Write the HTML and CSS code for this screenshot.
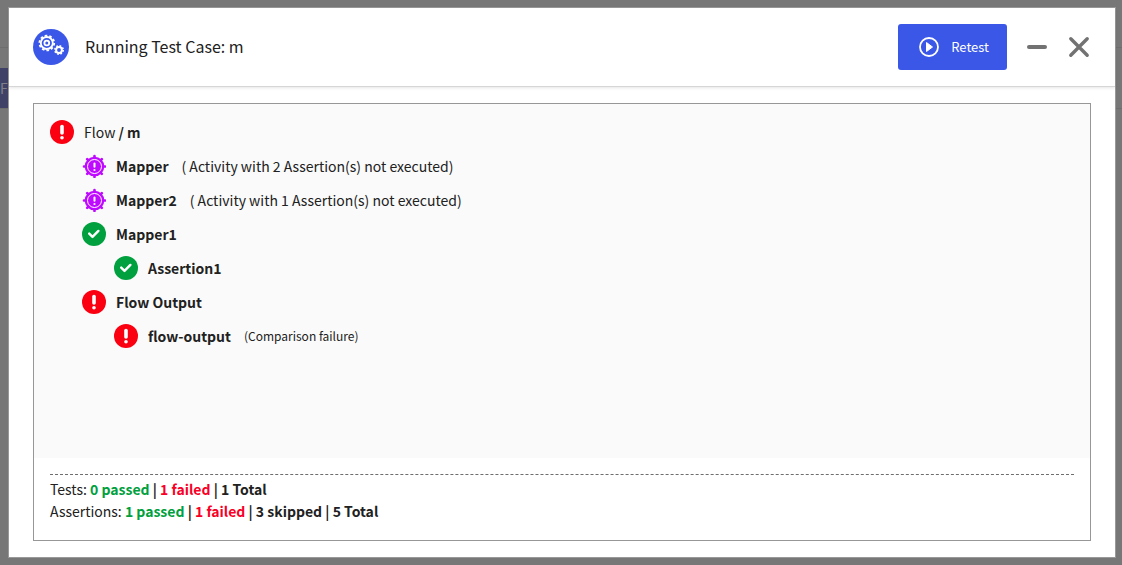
FILE: index.html
```html
<!DOCTYPE html>
<html lang="en">
<head>
    <meta charset="UTF-8">
    <meta name="viewport" content="width=device-width, initial-scale=1.0">
    <title>Running Test Case: m</title>
    <link rel="stylesheet" href="styles.css">
</head>
<body>
    <svg class="sprite" aria-hidden="true">
        <symbol id="icon-error" viewBox="0 0 24 24">
            <circle cx="12" cy="12" r="12" fill="#fa0011"/>
            <path d="M12 6.6v6.4" stroke="#fff" stroke-width="3.6" stroke-linecap="round"/>
            <circle cx="12" cy="17.8" r="1.8" fill="#fff"/>
        </symbol>
        <symbol id="icon-success" viewBox="0 0 24 24">
            <circle cx="12" cy="12" r="12" fill="#00a03e"/>
            <path d="M7.2 11.6l3.3 3.3 5.9-6" fill="none" stroke="#fff" stroke-width="2.4" stroke-linecap="round" stroke-linejoin="round"/>
        </symbol>
        <symbol id="icon-skipped" viewBox="0 0 24 24">
            <g stroke="#be0aff" stroke-width="2.6" stroke-linecap="round">
                <path d="M12.5 2v21M2 12.5h21M5.2 5.2l14.6 14.6M19.8 5.2L5.2 19.8"/>
            </g>
            <circle cx="12.5" cy="12.5" r="9.8" fill="#be0aff"/>
            <circle cx="12.5" cy="12.5" r="7" fill="none" stroke="#fff" stroke-width="1"/>
            <path d="M12.5 9.4v3.4" stroke="#fff" stroke-width="2" stroke-linecap="round"/>
            <circle cx="12.5" cy="16" r="1.1" fill="#fff"/>
        </symbol>
    </svg>

    <div class="page">
        <div class="page-header"></div>
        <div class="page-toolbar">
            <span class="page-tab">Fl</span>
        </div>
    </div>

    <div class="modal" role="dialog" aria-labelledby="modal-title">
        <header class="modal-header">
            <svg class="modal-logo" viewBox="0 0 36 36" aria-hidden="true">
                <circle cx="18" cy="18" r="18" fill="#3a57e8"/>
                <g fill="none" stroke="#fff">
                    <circle cx="13.8" cy="14" r="6" stroke-width="1.8"/>
                    <circle cx="13.8" cy="14" r="7.4" stroke-width="1.8" stroke-dasharray="2.6 2.05"/>
                    <circle cx="13.8" cy="14" r="2.4" stroke-width="1.8"/>
                    <circle cx="26" cy="21" r="2.9" stroke-width="2"/>
                    <circle cx="26" cy="21" r="4.2" stroke-width="1.6" stroke-dasharray="1.7 1.6"/>
                </g>
            </svg>
            <h1 class="modal-title" id="modal-title">Running Test Case: m</h1>
            <button class="btn-retest" type="button">
                <svg class="btn-icon" viewBox="0 0 20 20" aria-hidden="true">
                    <circle cx="10" cy="10" r="9" fill="none" stroke="#fff" stroke-width="1.8"/>
                    <path d="M7.5 5.5v9l6-4.5z" fill="#fff" stroke="#fff" stroke-linejoin="round"/>
                </svg>
                Retest
            </button>
            <button class="btn-window" type="button" aria-label="Minimize">
                <svg viewBox="0 0 24 24"><path d="M4 12h16" stroke-width="4"/></svg>
            </button>
            <button class="btn-window" type="button" aria-label="Close">
                <svg viewBox="0 0 24 24"><path d="M3.8 3.8l16.4 16.4M20.2 3.8L3.8 20.2" stroke-width="3.4"/></svg>
            </button>
        </header>

        <main class="modal-body">
            <section class="report">
                <ul class="results">
                    <li>
                        <div class="result">
                            <svg class="status"><use href="#icon-error"/></svg>
                            <span>Flow <b>/ m</b></span>
                        </div>
                        <ul>
                            <li>
                                <div class="result">
                                    <svg class="status"><use href="#icon-skipped"/></svg>
                                    <b>Mapper</b>
                                    <span class="note">( Activity with 2 Assertion(s) not executed)</span>
                                </div>
                            </li>
                            <li>
                                <div class="result">
                                    <svg class="status"><use href="#icon-skipped"/></svg>
                                    <b>Mapper2</b>
                                    <span class="note">( Activity with 1 Assertion(s) not executed)</span>
                                </div>
                            </li>
                            <li>
                                <div class="result">
                                    <svg class="status"><use href="#icon-success"/></svg>
                                    <b>Mapper1</b>
                                </div>
                                <ul>
                                    <li>
                                        <div class="result">
                                            <svg class="status"><use href="#icon-success"/></svg>
                                            <b>Assertion1</b>
                                        </div>
                                    </li>
                                </ul>
                            </li>
                            <li>
                                <div class="result">
                                    <svg class="status"><use href="#icon-error"/></svg>
                                    <b>Flow Output</b>
                                </div>
                                <ul>
                                    <li>
                                        <div class="result">
                                            <svg class="status"><use href="#icon-error"/></svg>
                                            <b>flow-output</b>
                                            <span class="note note-small">(Comparison failure)</span>
                                        </div>
                                    </li>
                                </ul>
                            </li>
                        </ul>
                    </li>
                </ul>
                <footer class="summary">
                    <p>Tests: <b><span class="passed">0 passed</span> | <span class="failed">1 failed</span> | 1 Total</b></p>
                    <p>Assertions: <b><span class="passed">1 passed</span> | <span class="failed">1 failed</span> | 3 skipped | 5 Total</b></p>
                </footer>
            </section>
        </main>
    </div>
</body>
</html>
```
FILE: styles.css
```css
* {
    box-sizing: border-box;
}
html, body {
    height: 100%;
}
body {
    margin: 0;
    font-family: "Noto Sans CJK SC", sans-serif;
    font-size: 14px;
    line-height: 22px;
    color: #212121;
    background-color: #777;
    overflow: hidden;
}
ul {
    list-style: none;
    margin: 0;
    padding: 0;
}
.sprite {
    position: absolute;
    width: 0;
    height: 0;
}

/* dimmed page behind the dialog */
.page-header {
    height: 48px;
    border-bottom: 1px solid #6e6e6e;
}
.page-toolbar {
    padding-top: 20px;
    height: 61px;
    border-bottom: 1px solid #6e6e6e;
}
.page-tab {
    display: block;
    width: 80px;
    height: 40px;
    line-height: 40px;
    color: #80808c;
    background-color: #3f4266;
}

/* dialog */
.modal {
    position: absolute;
    top: 7px;
    right: 6px;
    bottom: 7px;
    left: 8px;
    display: flex;
    flex-direction: column;
    background-color: #fff;
    border: 1px solid #999;
}
.modal-header {
    display: flex;
    align-items: center;
    padding: 16px 24px;
    border-bottom: 1px solid #d6d6d6;
    box-shadow: 0 1px 3px rgba(0, 0, 0, 0.1);
}
.modal-logo {
    width: 36px;
    height: 36px;
}
.modal-title {
    flex: 1;
    margin: 0 0 0 16px;
    padding-bottom: 2px;
    font-size: 16px;
    font-weight: 400;
}
button {
    border: 0;
    padding: 0;
    background: none;
    font: inherit;
    cursor: pointer;
}
.btn-retest {
    display: flex;
    align-items: center;
    gap: 12px;
    height: 46px;
    padding: 0 18px 0 21px;
    border-radius: 3px;
    font-size: 13px;
    color: #fff;
    background-color: #3a57e8;
}
.btn-icon {
    width: 20px;
    height: 20px;
}
.btn-window {
    display: flex;
    margin-left: 18px;
}
.btn-window svg {
    width: 24px;
    height: 24px;
    fill: none;
    stroke: #727272;
    stroke-linecap: round;
}
.modal-body {
    flex: 1;
    display: flex;
    padding: 16px 24px;
}
.report {
    flex: 1;
    display: flex;
    flex-direction: column;
    border: 1px solid #979797;
}
.results {
    flex: 1;
    padding: 11px 16px;
    background-color: #fafafa;
}
.results ul {
    padding-left: 32px;
}
.result {
    display: flex;
    align-items: center;
    height: 34px;
}
.status {
    width: 24px;
    height: 24px;
    margin-right: 10px;
}
.note {
    margin-left: 13px;
}
.note-small {
    font-size: 12px;
}
.summary {
    padding: 16px 16px 18px;
}
.summary p {
    margin: 0;
}
.summary p:first-child {
    padding-top: 3px;
    border-top: 1px dashed #6e6e6e;
}
.passed {
    color: #00a03e;
}
.failed {
    color: #fa0026;
}
```
